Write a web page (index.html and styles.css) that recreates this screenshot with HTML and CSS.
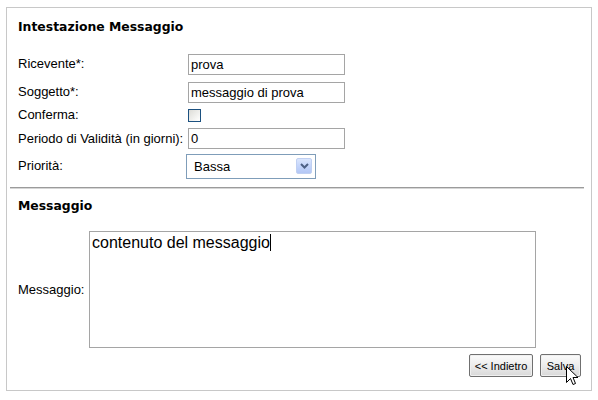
FILE: index.html
```html
<!DOCTYPE html>
<html>
<head>
<meta charset="utf-8">
<link rel="stylesheet" href="styles.css">
</head>
<body>
<div class="panel">
  <h2 class="section-title">Intestazione Messaggio</h2>
  <div class="form-grid">
    <label class="lbl">Ricevente*:</label>
    <div class="field"><div class="text-input">prova</div></div>
    <label class="lbl">Soggetto*:</label>
    <div class="field"><div class="text-input">messaggio di prova</div></div>
    <label class="lbl">Conferma:</label>
    <div class="field"><span class="checkbox"></span></div>
    <label class="lbl">Periodo di Validità (in giorni):</label>
    <div class="field"><div class="text-input">0</div></div>
    <label class="lbl">Priorità:</label>
    <div class="field">
      <div class="select">
        <span class="select-value">Bassa</span>
        <span class="select-btn">
          <svg width="9" height="6" viewBox="0 0 9 6"><path d="M1 1 L4.5 4.5 L8 1" fill="none" stroke="#4d6185" stroke-width="2"/></svg>
        </span>
      </div>
    </div>
  </div>
  <div class="separator"></div>
  <h2 class="section-title second">Messaggio</h2>
  <div class="msg-row">
    <label class="lbl msg-lbl">Messaggio:</label>
    <div class="textarea"><span>contenuto del messaggio</span><span class="caret"></span></div>
  </div>
  <div class="actions">
    <button class="btn btn-back">&lt;&lt; Indietro</button>
    <button class="btn btn-save">Salva</button>
  </div>
  <svg class="pointer" width="13" height="21" viewBox="0 0 13 21">
    <path d="M0.5 0.5 L0.5 16.5 L4.5 12.5 L7 18.5 L9.5 17.5 L7 11.5 L12 11.5 Z" fill="#fff" stroke="#000" stroke-width="1" stroke-linejoin="miter"/>
  </svg>
</div>
</body>
</html>
```
FILE: styles.css
```css
html, body {
  margin: 0;
  background: #ffffff;
}
body {
  padding: 7px 6px;
  font-family: "Liberation Sans", Arial, sans-serif;
  font-size: 13px;
  color: #000;
}
.panel {
  position: relative;
  box-sizing: border-box;
  width: 586px;
  height: 384px;
  border: 1px solid #c8c8c8;
  padding: 0 10px 0 11px;
}
.section-title {
  font-family: "DejaVu Sans", Verdana, sans-serif;
  font-weight: bold;
  font-size: 12.4px;
  line-height: 16px;
  margin: 11px 0 0 0;
  color: #000;
}
.form-grid {
  display: grid;
  grid-template-columns: 168px 1fr;
  grid-template-rows: 28px 28px 18px 29px 26px;
  margin-top: 15px;
  align-items: center;
}
.lbl {
  line-height: 16px;
  white-space: nowrap;
}
.field {
  display: flex;
  align-items: center;
}
.text-input {
  box-sizing: border-box;
  width: 157px;
  height: 21px;
  margin-left: 2px;
  border: 1px solid #a5a5a5;
  padding: 0 2px;
  line-height: 19px;
  white-space: nowrap;
  overflow: hidden;
}
.checkbox {
  box-sizing: border-box;
  width: 13px;
  height: 13px;
  margin-left: 2px;
  border: 1px solid #1c5180;
  background: linear-gradient(135deg, #dcdcd7 0%, #f5f5f3 70%, #ffffff 100%);
}
.select {
  box-sizing: border-box;
  width: 130px;
  height: 25px;
  border: 1px solid #7f9db9;
  display: flex;
  align-items: center;
  justify-content: space-between;
  padding: 0 3px 0 7px;
}
.select-value {
  line-height: 23px;
}
.select-btn {
  box-sizing: border-box;
  width: 16px;
  height: 16px;
  border-radius: 2px;
  background: linear-gradient(180deg, #dbe6fd 0%, #c4d5fb 50%, #b3c7f5 100%);
  border: 1px solid #c0d0f2;
  display: flex;
  align-items: center;
  justify-content: center;
}
.separator {
  margin: 8px 0 0 -8px;
  width: 574px;
  height: 1px;
  border-top: 1px solid #9b9b9b;
  background: #d6d6d6;
}
.section-title.second {
  margin-top: 9px;
}
.msg-row {
  display: flex;
  align-items: center;
  margin-top: 17px;
}
.msg-lbl {
  width: 71px;
}
.textarea {
  box-sizing: border-box;
  width: 447px;
  height: 117px;
  border: 1px solid #a5a5a5;
  padding: 1px 2px;
  font-size: 16px;
  line-height: 20px;
}
.caret {
  display: inline-block;
  width: 1px;
  height: 17px;
  background: #000;
  vertical-align: -3px;
}
.actions {
  display: flex;
  justify-content: flex-end;
  gap: 7px;
  margin-top: 6px;
}
.btn {
  box-sizing: border-box;
  height: 23px;
  border: 1px solid #707070;
  border-radius: 2px;
  background: linear-gradient(180deg, #fbfbfb 0%, #ececec 50%, #d8d8d8 100%);
  box-shadow: inset 0 0 0 1px #f0f0f0;
  font-family: "Liberation Sans", Arial, sans-serif;
  font-size: 11px;
  color: #000;
  padding: 0;
}
.btn-back {
  width: 64px;
}
.btn-save {
  width: 41px;
}
.pointer {
  position: absolute;
  left: 559px;
  top: 358px;
}
```
